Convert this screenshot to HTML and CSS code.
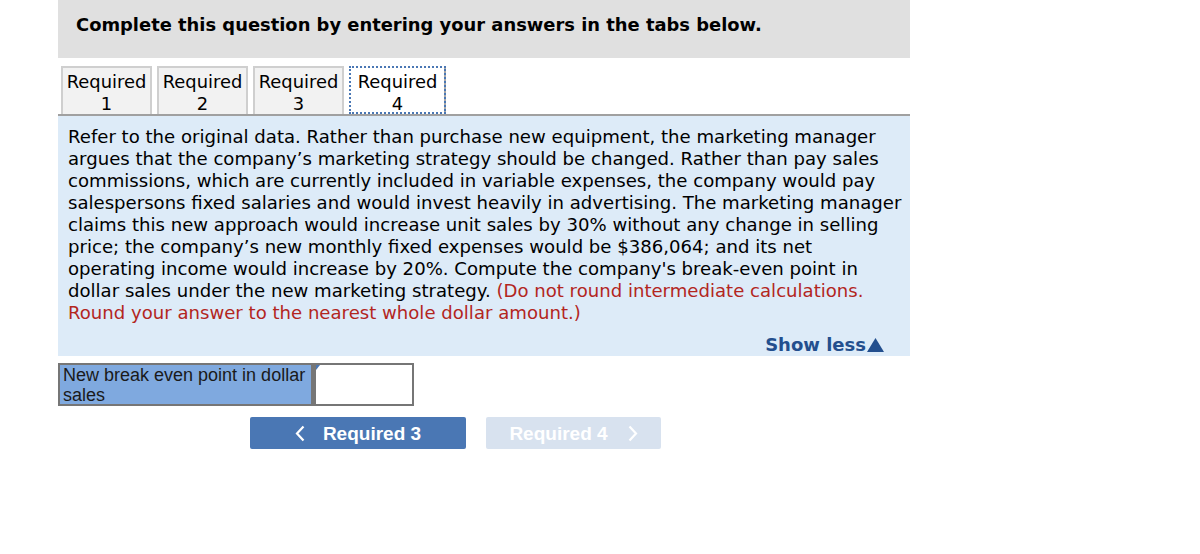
FILE: index.html
```html
<!DOCTYPE html>
<html>
<head>
<meta charset="utf-8">
<link rel="stylesheet" href="styles.css">
</head>
<body>
<div class="wrap">
  <div class="header">Complete this question by entering your answers in the tabs below.</div>
  <div class="tabs">
    <div class="tab">Required<br>1</div>
    <div class="tab">Required<br>2</div>
    <div class="tab">Required<br>3</div>
    <div class="tab active">Required<br>4</div>
  </div>
  <div class="panel">
    <p class="question">Refer to the original data. Rather than purchase new equipment, the marketing manager<br>argues that the company’s marketing strategy should be changed. Rather than pay sales<br>commissions, which are currently included in variable expenses, the company would pay<br>salespersons fixed salaries and would invest heavily in advertising. The marketing manager<br>claims this new approach would increase unit sales by 30% without any change in selling<br>price; the company’s new monthly fixed expenses would be $386,064; and its net<br>operating income would increase by 20%. Compute the company's break-even point in<br>dollar sales under the new marketing strategy. <span class="red">(Do not round intermediate calculations.<br>Round your answer to the nearest whole dollar amount.)</span></p>
    <div class="showless">Show less<svg class="tri" width="17" height="14" viewBox="0 0 17 14"><path d="M8.5 0 L17 14 L0 14 Z" fill="#234f8e"/></svg></div>
  </div>
  <div class="answer">
    <div class="label">New break even point in dollar sales</div>
    <div class="input"><span class="mark"></span></div>
  </div>
  <div class="nav">
    <div class="btn prev"><svg class="chev" width="10" height="17" viewBox="0 0 10 17"><path d="M8.5 1.5 L2 8.5 L8.5 15.5" fill="none" stroke="#fff" stroke-width="2.2"/></svg>Required 3</div>
    <div class="btn next disabled">Required 4<svg class="chev" width="10" height="17" viewBox="0 0 10 17"><path d="M1.5 1.5 L8 8.5 L1.5 15.5" fill="none" stroke="#fff" stroke-width="2.2"/></svg></div>
  </div>
</div>
</body>
</html>
```
FILE: styles.css
```css
html, body {
  margin: 0;
  padding: 0;
  background: #fff;
}
body {
  font-family: "DejaVu Sans", Verdana, sans-serif;
  color: #000;
}
.wrap {
  margin-left: 58px;
  width: 852px;
}
.header {
  background: #e0e0e0;
  height: 58px;
  box-sizing: border-box;
  padding: 14px 0 0 18px;
  font-weight: bold;
  font-size: 17.9px;
  line-height: 22px;
}
.tabs {
  display: flex;
  gap: 5px;
  padding: 8px 0 0 3px;
  height: 56px;
  box-sizing: border-box;
}
.tab {
  width: 91px;
  height: 48px;
  box-sizing: border-box;
  border: 2px solid #cfcfcf;
  border-bottom: none;
  background: #f2f2f2;
  text-align: center;
  font-size: 17.9px;
  line-height: 22px;
  padding-top: 3px;
  white-space: nowrap;
  overflow: hidden;
}
.tab.active {
  width: 97px;
  margin-left: 0;
  background: #fff;
  border: 2px solid #a8a8a8;
  border-left-color: #fff;
  border-top-color: #fff;
  border-bottom: none;
  outline: 2px dotted #4a77b4;
  outline-offset: -2px;
}
.panel {
  background: #ddebf8;
  border-top: 2px solid #a0a0a0;
  padding: 10px 4px 0 10px;
  height: 242px;
  box-sizing: border-box;
}
.question {
  margin: 0;
  font-size: 18.1px;
  line-height: 22px;
  white-space: nowrap;
}
.red {
  color: #b3261e;
}
.showless {
  display: flex;
  justify-content: flex-end;
  align-items: center;
  color: #234f8e;
  font-weight: bold;
  font-size: 18px;
  line-height: 22px;
  margin-top: 10px;
  padding-right: 22px;
}
.tri {
  margin-left: 1px;
  margin-top: -1px;
}
.answer {
  display: flex;
  margin-top: 7px;
}
.label {
  width: 255px;
  height: 43px;
  box-sizing: border-box;
  background: #7fa9df;
  border: 2px solid #767676;
  font-family: "Liberation Sans", Arial, sans-serif;
  font-size: 18px;
  line-height: 20px;
  padding: 0 3px;
  color: #1a1a1a;
}
.input {
  width: 101px;
  height: 43px;
  box-sizing: border-box;
  border: 2px solid #767676;
  border-left: 3px solid #767676;
  background: #fff;
  position: relative;
}
.mark {
  position: absolute;
  left: 0;
  top: 0;
  width: 0;
  height: 0;
  border-top: 5px solid #4a77b4;
  border-right: 4px solid transparent;
}
.nav {
  display: flex;
  gap: 20px;
  margin: 11px 0 0 192px;
}
.btn {
  height: 32px;
  box-sizing: border-box;
  background: #4a77b4;
  color: #fff;
  font-family: "Liberation Sans", Arial, sans-serif;
  font-weight: bold;
  font-size: 19px;
  line-height: 33px;
  border-radius: 2px;
  display: flex;
  justify-content: center;
  align-items: center;
}
.prev {
  width: 216px;
}
.next {
  width: 175px;
}
.disabled {
  background: #d8e2ef;
}
.prev .chev {
  margin-right: 18px;
}
.next .chev {
  margin-left: 20px;
}
```
